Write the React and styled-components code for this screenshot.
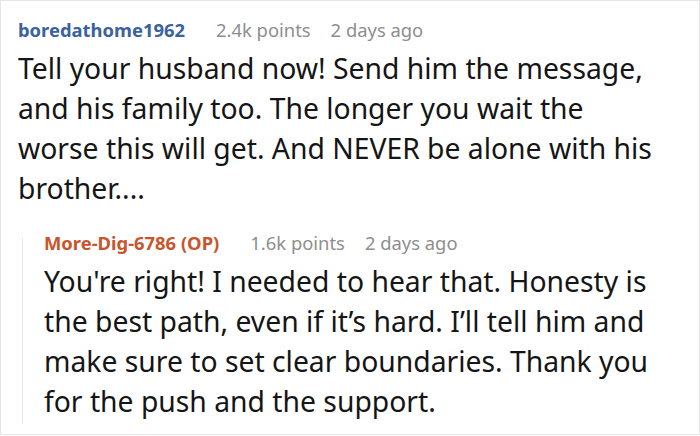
import React from "react";
import styled, { createGlobalStyle } from "styled-components";

const GlobalStyle = createGlobalStyle`
  html, body {
    margin: 0;
    padding: 0;
    background: #fff;
  }
  body {
    font-family: "Noto Sans", "Open Sans", sans-serif;
  }
`;

const comment = {
  author: "boredathome1962",
  points: "2.4k points",
  time: "2 days ago",
  text: "Tell your husband now! Send him the message, and his family too. The longer you wait the worse this will get. And NEVER be alone with his brother....",
  reply: {
    author: "More-Dig-6786 (OP)",
    points: "1.6k points",
    time: "2 days ago",
    text: "You're right! I needed to hear that. Honesty is the best path, even if it’s hard. I’ll tell him and make sure to set clear boundaries. Thank you for the push and the support.",
  },
};

const Frame = styled.div`
  width: 700px;
  height: 435px;
  box-sizing: border-box;
  border: 1px solid #e6e6e6;
  padding: 17px 0 0 17px;
  overflow: hidden;
`;

const Comment = styled.div`
  display: flex;
  flex-direction: column;
  width: ${(p) => p.$width}px;
`;

const Meta = styled.div`
  display: flex;
  align-items: baseline;
  font-size: 18.4px;
  line-height: 24px;
  white-space: nowrap;
`;

const Author = styled.span`
  font-weight: 700;
  color: ${(p) => (p.$op ? "#c8552c" : "#3a62a0")};
  margin-right: 31px;
`;

const Light = styled.span`
  color: #8e8e8e;
  & + & {
    margin-left: 20px;
  }
`;

const Body = styled.p`
  margin: 6px 0 0;
  font-size: 28.3px;
  line-height: 40px;
  color: #151515;
`;

const Reply = styled.div`
  position: relative;
  margin: 23px 0 0 26px;

  &::before {
    content: "";
    position: absolute;
    left: -22px;
    top: 7px;
    bottom: -3px;
    width: 1px;
    background: #e6e6e6;
  }
`;

function CommentView({ data, op, width }) {
  return (
    <Comment $width={width}>
      <Meta>
        <Author $op={op}>{data.author}</Author>
        <Light>{data.points}</Light>
        <Light>{data.time}</Light>
      </Meta>
      <Body>{data.text}</Body>
    </Comment>
  );
}

export default function App() {
  return (
    <>
      <GlobalStyle />
      <Frame>
        <CommentView data={comment} width={634} />
        <Reply>
          <CommentView data={comment.reply} op width={641} />
        </Reply>
      </Frame>
    </>
  );
}
